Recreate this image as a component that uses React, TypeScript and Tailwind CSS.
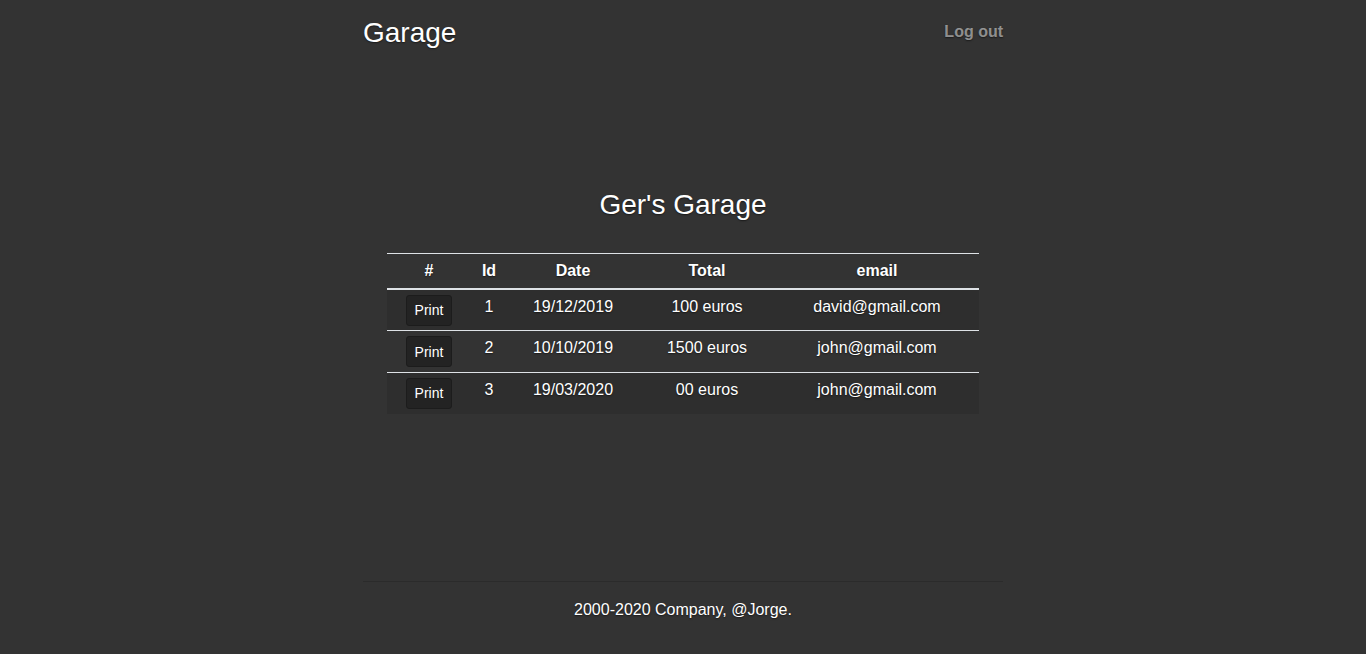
import React from "react";

const rows = [
  { id: 1, date: "19/12/2019", total: "100 euros", email: "david@gmail.com" },
  { id: 2, date: "10/10/2019", total: "1500 euros", email: "john@gmail.com" },
  { id: 3, date: "19/03/2020", total: "00 euros", email: "john@gmail.com" },
];

const App: React.FC = () => {
  return (
    <div
      className="min-h-screen bg-[#333333] text-white [text-shadow:0_0.05rem_0.1rem_rgba(0,0,0,0.5)]"
      style={{ fontFamily: '"Liberation Sans", Arial, sans-serif' }}
    >
      <div className="mx-auto flex h-screen w-[672px] flex-col p-4">
        <header className="flex items-start justify-between">
          <h3 className="text-[28px] leading-[1.2]">Garage</h3>
          <nav>
            <a href="#" className="block py-1 text-base leading-6 font-bold text-white/50">
              Log out
            </a>
          </nav>
        </header>

        <main className="mt-[138px] flex flex-col items-center">
          <h3 className="text-[28px] leading-[1.2]">Ger's Garage</h3>
          <table className="mt-8 w-[592px] table-fixed border-collapse text-center text-base leading-6">
            <thead>
              <tr className="border-t border-[#dee2e6]">
                <th className="w-[84px] border-b-2 border-[#dee2e6] p-[4.8px] font-bold">#</th>
                <th className="w-[36px] border-b-2 border-[#dee2e6] p-[4.8px] font-bold">Id</th>
                <th className="w-[132px] border-b-2 border-[#dee2e6] p-[4.8px] font-bold">Date</th>
                <th className="w-[136px] border-b-2 border-[#dee2e6] p-[4.8px] font-bold">Total</th>
                <th className="w-[204px] border-b-2 border-[#dee2e6] p-[4.8px] font-bold">email</th>
              </tr>
            </thead>
            <tbody>
              {rows.map((r, i) => (
                <tr
                  key={r.id}
                  className={`align-top ${i > 0 ? "border-t border-[#dee2e6]" : ""} ${
                    i % 2 === 0 ? "bg-[#2e2e2e]" : ""
                  }`}
                >
                  <td className="p-[4.8px]">
                    <button className="h-[31px] rounded-[3px] border border-[#1c1c1c] bg-[#232323] px-2 text-[14px] leading-5 text-white">
                      Print
                    </button>
                  </td>
                  <td className="p-[4.8px]">{r.id}</td>
                  <td className="p-[4.8px]">{r.date}</td>
                  <td className="p-[4.8px]">{r.total}</td>
                  <td className="p-[4.8px]">{r.email}</td>
                </tr>
              ))}
            </tbody>
          </table>
        </main>

        <footer className="mt-auto border-t border-[#2b2b2b] pt-4 pb-4 text-center text-base leading-6">
          2000-2020 Company, @Jorge.
        </footer>
      </div>
    </div>
  );
};

export default App;
